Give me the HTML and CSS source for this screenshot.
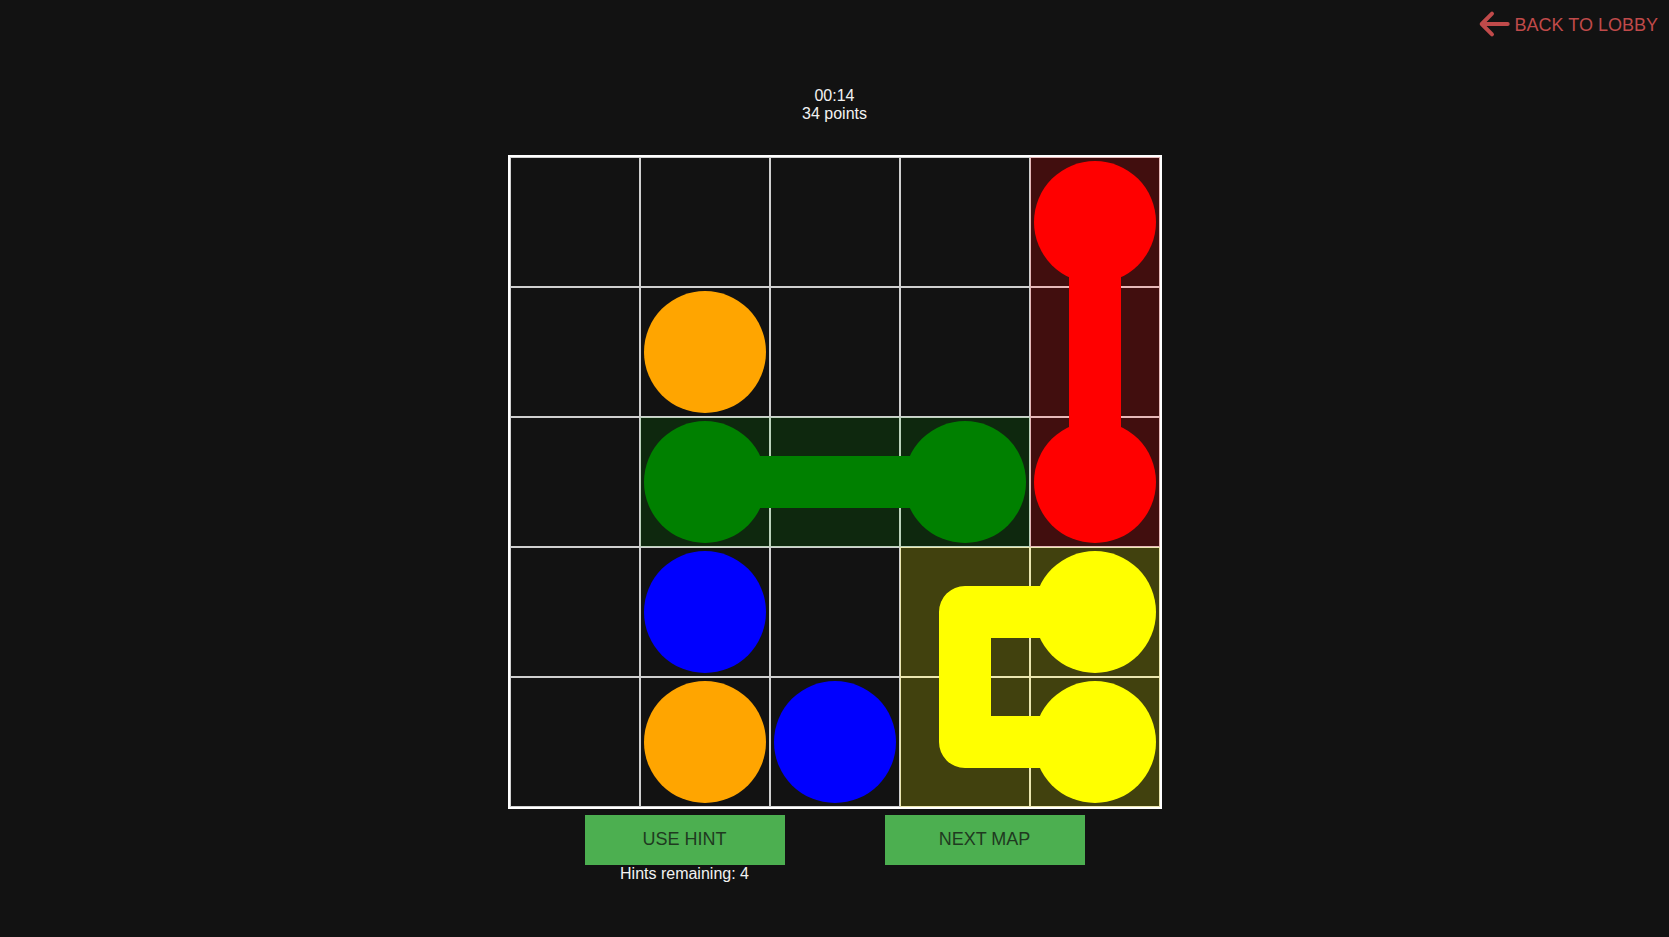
FILE: index.html
```html
<!DOCTYPE html>
<html lang="en">
<head>
<meta charset="utf-8">
<title>Flow</title>
<link rel="stylesheet" href="styles.css">
</head>
<body>
<header class="topbar">
  <a class="back" href="#">
    <svg class="back-icon" width="36" height="30" viewBox="0 0 36 30" aria-hidden="true">
      <path d="M4.7 15 H30.7 M15 4.7 L4.7 15 L15 25.3" fill="none" stroke="currentColor" stroke-width="4" stroke-linecap="round" stroke-linejoin="round"/>
    </svg>
    <span class="back-text">BACK TO LOBBY</span>
  </a>
</header>
<main class="game">
  <div class="info">
    <div>00:14</div>
    <div>34 points</div>
  </div>
  <div class="board">
    <div class="grid">
      <div class="cell"></div>
      <div class="cell"></div>
      <div class="cell"></div>
      <div class="cell"></div>
      <div class="cell t-red"><span class="dot red"></span></div>

      <div class="cell"></div>
      <div class="cell"><span class="dot orange"></span></div>
      <div class="cell"></div>
      <div class="cell"></div>
      <div class="cell t-red"></div>

      <div class="cell"></div>
      <div class="cell t-green"><span class="dot green"></span></div>
      <div class="cell t-green"></div>
      <div class="cell t-green"><span class="dot green"></span></div>
      <div class="cell t-red"><span class="dot red"></span></div>

      <div class="cell"></div>
      <div class="cell"><span class="dot blue"></span></div>
      <div class="cell"></div>
      <div class="cell t-yellow"></div>
      <div class="cell t-yellow"><span class="dot yellow"></span></div>

      <div class="cell"></div>
      <div class="cell"><span class="dot orange"></span></div>
      <div class="cell"><span class="dot blue"></span></div>
      <div class="cell t-yellow"></div>
      <div class="cell t-yellow"><span class="dot yellow"></span></div>
    </div>
    <svg class="pipes" width="650" height="650" viewBox="0 0 650 650" aria-hidden="true">
      <path d="M585 65 V325" stroke="#ff0000"/>
      <path d="M195 325 H455" stroke="#008000"/>
      <path d="M585 455 H455 V585 H585" stroke="#ffff00"/>
    </svg>
  </div>
  <div class="actions">
    <div class="action">
      <button class="btn" type="button">USE HINT</button>
      <div class="hints">Hints remaining: 4</div>
    </div>
    <div class="action">
      <button class="btn" type="button">NEXT MAP</button>
    </div>
  </div>
</main>
</body>
</html>
```
FILE: styles.css
```css
* { box-sizing: border-box; }

html, body {
  margin: 0;
  padding: 0;
  background: #121212;
  color: #ffffff;
  font-family: "Liberation Sans", Arial, sans-serif;
}

body {
  min-height: 937px;
}

.topbar {
  display: flex;
  justify-content: flex-end;
  align-items: center;
  height: 48px;
  padding-right: 11px;
}

.back {
  display: flex;
  align-items: center;
  color: #c04a4a;
  text-decoration: none;
  font-size: 18px;
}

.back-icon {
  display: block;
  margin-right: 2px;
}

.back-text {
  padding-top: 2px;
}

.game {
  display: flex;
  flex-direction: column;
  align-items: center;
}

.info {
  margin-top: 39px;
  font-size: 16px;
  line-height: 18px;
  text-align: center;
  color: #f2f2f2;
}

.board {
  position: relative;
  margin-top: 32px;
  width: 654px;
  height: 654px;
}

.grid {
  display: grid;
  grid-template-columns: repeat(5, 130px);
  grid-template-rows: repeat(5, 130px);
  border: 2px solid #ffffff;
}

.cell {
  display: flex;
  align-items: center;
  justify-content: center;
  border: 1px solid #cfcfcf;
}

.t-red { background: rgba(255, 0, 0, 0.2); border-color: #e6b8b8; }
.t-green { background: rgba(0, 128, 0, 0.2); border-color: #bcd2bc; }
.t-yellow { background: rgba(255, 255, 0, 0.2); border-color: #ebe6b0; }

.dot {
  display: block;
  flex: none;
  width: 122px;
  height: 122px;
  border-radius: 50%;
}

.red { background: #ff0000; }
.orange { background: #ffa500; }
.green { background: #008000; }
.blue { background: #0000ff; }
.yellow { background: #ffff00; }

.pipes {
  position: absolute;
  left: 2px;
  top: 2px;
  pointer-events: none;
}

.pipes path {
  fill: none;
  stroke-width: 52;
  stroke-linejoin: round;
  stroke-linecap: butt;
}

.actions {
  display: flex;
  align-items: flex-start;
  gap: 100px;
  margin-top: 6px;
}

.action {
  display: flex;
  flex-direction: column;
  align-items: center;
  width: 200px;
}

.btn {
  width: 200px;
  height: 50px;
  border: none;
  background: #4caf50;
  color: #1f3a20;
  font-family: "Liberation Sans", Arial, sans-serif;
  font-size: 18px;
  padding: 0 0 2px 0;
  cursor: pointer;
}

.hints {
  font-size: 16px;
  line-height: 18px;
  color: #f2f2f2;
}
```
